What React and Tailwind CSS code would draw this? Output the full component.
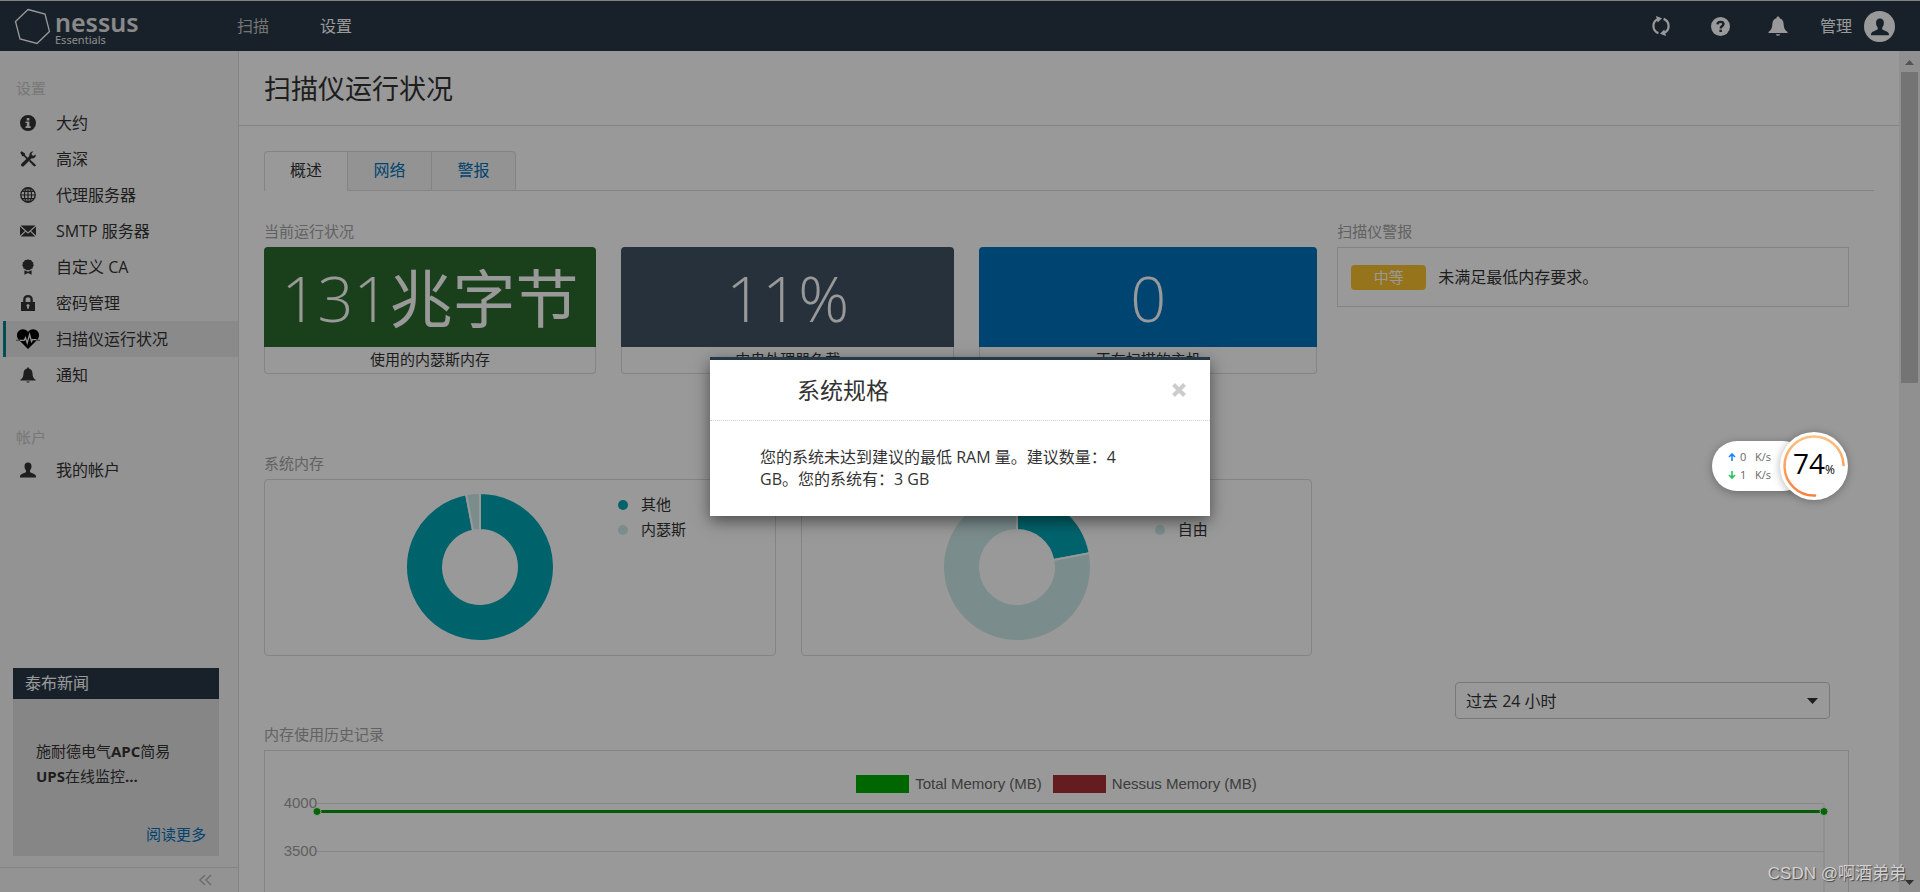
import React from 'react';

const menu = [
  { icon: 'info', label: '大约' },
  { icon: 'tools', label: '高深' },
  { icon: 'globe', label: '代理服务器' },
  { icon: 'mail', label: 'SMTP 服务器' },
  { icon: 'award', label: '自定义 CA' },
  { icon: 'lock', label: '密码管理' },
  { icon: 'heart', label: '扫描仪运行状况', active: true },
  { icon: 'bell', label: '通知' },
];

const BELL = 'M8 0.4c-.7 0-1.2.5-1.2 1.1v.3C4.6 2.3 3.6 4 3.5 6.4 3.4 9.3 2.6 11.300 .4 12.700v.9h15.200v-.9c-2.200-1.400-3-3.400-3.100-6.300-.1-2.400-1.100-4.100-3.300-4.600v-.3C9.200.9 8.700.4 8 .4zM6.300 14.600h3.400c-.2.8-.9 1.200-1.700 1.200s-1.500-.4-1.700-1.200z';
const USER = 'M8 .5c2.300 0 3.500 1.500 3.500 3.700 0 1.700-.6 3.200-1.500 4.200v1.700c.4.8 5.500 1.700 6 4.100v1.300H0v-1.300c.5-2.400 5.600-3.300 6-4.100V8.400C5.100 7.400 4.500 5.900 4.500 4.200 4.500 2 5.700.5 8 .5z';

const Icon = ({ name, className }) => (
  <svg className={className} viewBox="0 0 16 16" fill="currentColor" aria-hidden="true">
    {name === 'info' && (
      <path fillRule="evenodd" d="M8 0a8 8 0 1 1 0 16A8 8 0 0 1 8 0zM6.700 3v2.400h2.700V3H6.700zM5.500 6.500v1.600h1.300v3.200H5.500v1.600h5.200v-1.600H9.400V6.500H5.500z" />
    )}
    {name === 'tools' && (
      <g>
        <path d="M.3 1.600 1.700.3 5 2.500v1.600l3.100 3.100-1.200 1.200-3.100-3.100H2.300L.3 1.600z" />
        <path d="m10.200 8.700 5.200 4.700c.6.6.6 1.100 0 1.700s-1.200.6-1.800 0L8.900 10l1.300-1.300z" />
        <path d="M15.700 3.400c.6 2.300-1.600 4.500-4 3.900L4 15c-.8.8-1.800.8-2.500.1s-.7-1.700.1-2.500l7.800-7.500C8.900 2.600 11 .3 13.400.6l-1.900 2 .4 1.700 1.800.5 2-1.400z" />
      </g>
    )}
    {name === 'globe' && (
      <g fill="none" stroke="currentColor" strokeWidth="1.2">
        <circle cx="8" cy="8" r="7.200" strokeWidth="1.400" />
        <ellipse cx="8" cy="8" rx="3.600" ry="7.200" />
        <path d="M8 1v14M1 8h14M2 4.400h12M2 11.600h12" />
      </g>
    )}
    {name === 'mail' && (
      <g>
        <path d="M.6 2.500h14.800L8 9.200.6 2.500z" />
        <path d="M0 3.500 4.900 8 0 12.600V3.500zM16 3.500 11.100 8 16 12.600V3.500z" />
        <path d="M5.700 8.700 8 10.800l2.300-2.100 4.900 4.800H.8l4.900-4.800z" />
      </g>
    )}
    {name === 'award' && (
      <g>
        <path d="m8 .2 1.400.9 1.700-.1.800 1.500 1.400.9-.1 1.700.6 1.500-1 1.400-.3 1.600-1.600.5-1.200 1.200L8 10.900l-1.700.4-1.200-1.200-1.600-.5-.3-1.600-1-1.400.6-1.500-.1-1.700 1.400-.9.800-1.500 1.700.1L8 .2z" />
        <path d="M4.400 11.200 8 12.700l3.600-1.500v4.600L8 13.900l-3.600 1.900v-4.600z" />
      </g>
    )}
    {name === 'lock' && (
      <path fillRule="evenodd" d="M3.200 7V4.400C3.200 1.600 5.100 0 8 0s4.800 1.600 4.800 4.400V7H15v9H1V7h2.200zm2.400 0h4.800V4.500C10.400 3 9.500 2.200 8 2.200s-2.400.8-2.400 2.300V7zM8 9.200c-1 0-1.600.6-1.600 1.400 0 .5.300.9.700 1.200v1.900h1.800v-1.900c.4-.3.7-.7.7-1.200C9.600 9.800 9 9.200 8 9.200z" />
    )}
    {name === 'bell' && <path d={BELL} />}
    {name === 'user' && <path d={USER} />}
  </svg>
);

const HeartIcon = () => (
  <svg className="h-5 w-6" viewBox="0 0 24 20" aria-hidden="true">
    <path fill="#000" d="M12 20 2.700 10.700C-.2 7.500.7 2.600 4 1c3-1.400 6.300-.5 8 2 1.700-2.500 5-3.400 8-2 3.300 1.600 4.200 6.500 1.300 9.700L12 20z" />
    <path fill="none" stroke="#f0f0f0" strokeWidth="1.300" d="M3.500 11.300h4.700l1.300-2.600 1.700 5.300L13.600 5.500l1.900 7 1-1.800h4.200" />
    <path stroke="#666" strokeWidth="1" d="M0 11.300h4M20 11.300h4" />
  </svg>
);

const MenuItem = ({ item }) => (
  <li>
    <a
      href="#"
      className={
        item.active
          ? 'ml-[3px] flex h-9 items-center border-l-[3px] border-[#00818d] bg-[#e6e6e6] pl-[10px] text-base'
          : 'flex h-9 items-center pl-4 text-base'
      }
    >
      <span className="mr-4 flex w-6 justify-center">
        {item.active ? <HeartIcon /> : <Icon name={item.icon} className="size-4" />}
      </span>
      {item.label}
    </a>
  </li>
);

const Sidebar = () => (
  <aside className="flex w-[239px] shrink-0 flex-col border-r border-[#dcdcdc] bg-[#f5f5f5]">
    <nav className="pt-[25px]">
      <h3 className="mb-[5px] pl-4 text-[15px] leading-6 text-[#c8c8c8]">设置</h3>
      <ul>
        {menu.map((item) => (
          <MenuItem key={item.label} item={item} />
        ))}
      </ul>
      <h3 className="mt-8 mb-[3px] pl-4 text-[15px] leading-6 text-[#c8c8c8]">帐户</h3>
      <ul>
        <MenuItem item={{ icon: 'user', label: '我的帐户' }} />
      </ul>
    </nav>
    <section className="mt-auto mr-[19px] mb-[11px] ml-[13px] bg-[#e0e0e0]">
      <h3 className="bg-[#283846] px-3 text-base leading-[31px] text-white">泰布新闻</h3>
      <p className="px-[23px] pt-10 text-[15px] leading-[25px]">
        施耐德电气<b>APC</b>简易
        <br />
        <b>UPS</b>在线监控<b>...</b>
      </p>
      <p className="px-[13px] pt-[33px] pb-[9px] text-right text-[15px] leading-[25px]">
        <a href="#" className="text-[#0071b9]">阅读更多</a>
      </p>
    </section>
    <button className="flex h-[25px] items-center justify-end border-t border-[#dcdcdc] pr-[26px]" aria-label="collapse">
      <svg className="h-3 w-[14px]" viewBox="0 0 14 12" fill="none" stroke="#b5b5b5" strokeWidth="1.500">
        <path d="M7 1 2 6l5 5M13 1 8 6l5 5" />
      </svg>
    </button>
  </aside>
);

const Header = () => (
  <header className="flex h-[51px] shrink-0 items-center border-t border-[#d6d6d6] bg-[#283846] text-white">
    <a href="#" className="flex w-[237px] items-center pl-[14px]">
      <svg className="size-[37px]" viewBox="0 0 37 37" fill="none" stroke="#fff" strokeWidth="1.300">
        <path d="M14 1.500 31 6l4.500 17.500L23 35.500 6 31 1.500 13.500 14 1.500z" />
      </svg>
      <span className="ml-1 flex flex-col pt-1 font-[Noto_Sans]">
        <span className="text-[25px] leading-6 font-semibold text-[#e6e6e6]">nessus</span>
        <span className="text-[11px] leading-3 text-[#e6e6e6]">Essentials</span>
      </span>
    </a>
    <nav className="flex gap-[51px] text-base">
      <a href="#" className="text-[#c4c4c4]">扫描</a>
      <a href="#">设置</a>
    </nav>
    <div className="ml-auto flex items-center pr-[25px]">
      <button className="mr-10" aria-label="refresh">
        <svg className="size-5" viewBox="0 0 20 20">
          <path fill="none" stroke="#fff" strokeWidth="2.200" d="M12.600 2.900a7.600 7.600 0 0 1 1.200 13.700M7.400 17.100A7.600 7.600 0 0 1 6.200 3.400" />
          <path fill="#fff" d="M5 0l6 2.300-4.300 4.200L5 0zM15 20l-6-2.300 4.300-4.200L15 20z" />
        </svg>
      </button>
      <button className="mr-[38px]" aria-label="help">
        <svg className="size-[19px]" viewBox="0 0 19 19">
          <circle cx="9.500" cy="9.500" r="9.500" fill="#fff" />
          <path fill="none" stroke="#283846" strokeWidth="2.400" d="M6.500 7.400C6.600 5.700 7.700 4.900 9.500 4.900c1.900 0 3 .8 3 2.200 0 2-2.800 1.900-2.800 4.300" />
          <path fill="#283846" d="M8.400 12.700h2.500v2.300H8.400z" />
        </svg>
      </button>
      <button className="mr-8" aria-label="notifications">
        <Icon name="bell" className="size-5" />
      </button>
      <button className="flex items-center gap-3 text-base">
        管理
        <svg className="size-[31px]" viewBox="0 0 31 31">
          <circle cx="15.500" cy="15.500" r="15.500" fill="#fff" />
          <path fill="#283846" transform="translate(7 7) scale(1.120)" d={USER} />
        </svg>
      </button>
    </div>
  </header>
);

const Label = ({ children }) => (
  <h3 className="mb-1 text-[15px] leading-6 text-[#a3a3a3]">{children}</h3>
);

const StatCard = ({ color, value, label }) => (
  <div className="text-center">
    <div className={`flex h-[100px] items-center justify-center rounded-t text-[63px] leading-none font-light text-white ${color}`}>
      {value}
    </div>
    <div className="h-[27px] rounded-b border border-t-0 border-[#dcdcdc] text-[15px] leading-[25px]">{label}</div>
  </div>
);

// point on a circle, angle as a share of the full turn starting at 12 o'clock
const point = (share, r) => {
  const a = share * Math.PI * 2 - Math.PI / 2;
  return `${75 + r * Math.cos(a)} ${75 + r * Math.sin(a)}`;
};

const slice = (from, to) => {
  const large = to - from > 0.5 ? 1 : 0;
  return `M${point(from, 74)}A74 74 0 ${large} 1 ${point(to, 74)}L${point(to, 37)}A37 37 0 ${large} 0 ${point(from, 37)}Z`;
};

const Donut = ({ title, share, names }) => (
  <div>
    <Label>{title}</Label>
    <div className="flex h-[177px] rounded border border-[#dcdcdc] pl-[140px]">
      <svg className="mt-[12px] size-[150px] shrink-0" viewBox="0 0 150 150" stroke="#fff" strokeWidth="2">
        <path fill="#00a5b5" d={slice(0, share)} />
        <path fill="#cdeaec" d={slice(share, 1)} />
      </svg>
      <ul className="mt-[12px] ml-[63px] text-[15px] leading-[25px]">
        <li className="flex items-center gap-[13px]">
          <span className="size-[10px] rounded-full bg-[#00a5b5]" />
          {names[0]}
        </li>
        <li className="flex items-center gap-[13px]">
          <span className="size-[10px] rounded-full bg-[#cdeaec]" />
          {names[1]}
        </li>
      </ul>
    </div>
  </div>
);

const History = () => (
  <div className="h-[400px] border border-[#dcdcdc] px-6 pt-[23px] font-[Liberation_Sans] text-[15px] text-[#666]">
    <div className="flex justify-center gap-[11px] leading-5">
      <span className="flex items-center gap-[6px]">
        <span className="h-[18px] w-[53px] bg-[#00aa00]" />
        Total Memory (MB)
      </span>
      <span className="flex items-center gap-[6px]">
        <span className="h-[18px] w-[53px] bg-[#a93034]" />
        Nessus Memory (MB)
      </span>
    </div>
    <div className="flex">
      <div className="w-7 shrink-0 text-right leading-[18px] text-[#a0a0a0]">
        <div className="-ml-6 h-12">4000</div>
        <div className="-ml-6 h-12">3500</div>
      </div>
      <svg className="h-[300px] grow overflow-visible" stroke="#e2e2e2">
        <line x1="0" y1="9.500" x2="100%" y2="9.500" />
        <line x1="0" y1="57.500" x2="100%" y2="57.500" />
        <line x1="100%" y1="9.500" x2="100%" y2="300" />
        <line x1="0" y1="17.500" x2="100%" y2="17.500" stroke="#0a9a0a" strokeWidth="3" />
        <circle cx="0" cy="17.500" r="4" fill="#00aa00" stroke="#fff" />
        <circle cx="100%" cy="17.500" r="4" fill="#00aa00" stroke="#fff" />
      </svg>
    </div>
  </div>
);

const Scrollbar = () => (
  <div className="flex w-[21px] shrink-0 flex-col items-center justify-between bg-[#f1f1f1]">
    <div className="flex w-full flex-col items-center">
      <svg className="h-[21px] w-[9px]" viewBox="0 0 9 21">
        <path fill="#8b8b8b" d="M4.500 9 9 14H0z" />
      </svg>
      <div className="h-[311px] w-[17px] bg-[#c1c1c1]" />
    </div>
    <svg className="h-[21px] w-[9px]" viewBox="0 0 9 21">
      <path fill="#505050" d="M4.500 14 0 9h9z" />
    </svg>
  </div>
);

const Modal = () => (
  <div role="dialog" aria-label="系统规格" className="absolute top-[40%] left-1/2 w-[500px] -translate-x-1/2 border-t-[3px] border-[#263746] bg-white shadow-[0_5px_15px_rgba(0,0,0,0.5)]">
    <div className="flex h-[61px] items-center justify-between border-b border-dotted border-[#d0d0d0] pr-6 pl-[87px]">
      <h2 className="text-[23px] leading-8">系统规格</h2>
      <button aria-label="close">
        <svg className="size-[14px]" viewBox="0 0 14 14" stroke="#ccc" strokeWidth="4">
          <path d="m1.500 1.500 11 11M12.500 1.500l-11 11" />
        </svg>
      </button>
    </div>
    <p className="pt-[25px] pr-20 pb-[26px] pl-[50px] text-base leading-[22px]">
      您的系统未达到建议的最低 RAM 量。建议数量：4 GB。您的系统有：3 GB
    </p>
  </div>
);

const SpeedBall = () => (
  <div className="absolute top-[432px] right-[72px] flex items-center">
    <div className="-mr-[28px] flex h-[50px] w-24 flex-col justify-center rounded-full bg-white pl-4 text-[11px] leading-[18px] text-[#666] shadow-[0_2px_10px_rgba(0,0,0,0.3)]">
      <span className="flex items-center">
        <svg className="mr-1 size-2" viewBox="0 0 8 8" fill="none" stroke="#1d82f5" strokeWidth="1.600">
          <path d="M4 8V1M1 4l3-3 3 3" />
        </svg>
        <span className="w-[15px]">0</span>K/s
      </span>
      <span className="flex items-center">
        <svg className="mr-1 size-2" viewBox="0 0 8 8" fill="none" stroke="#21c25e" strokeWidth="1.600">
          <path d="M4 0v7M1 4l3 3 3-3" />
        </svg>
        <span className="w-[15px]">1</span>K/s
      </span>
    </div>
    <div className="relative flex size-[68px] items-center justify-center rounded-full bg-white shadow-[0_1px_8px_rgba(0,0,0,0.3)]">
      <svg className="absolute inset-0 size-full" viewBox="0 0 68 68" fill="none">
        <defs>
          <linearGradient id="ring" x1="0" y1="0" x2="0" y2="1">
            <stop offset="0" stopColor="#fdc283" />
            <stop offset="1" stopColor="#f9803a" />
          </linearGradient>
        </defs>
        <path d="M63.500 33A29.500 29.500 0 1 0 35 63.500" stroke="url(#ring)" strokeWidth="2.500" strokeLinecap="round" />
      </svg>
      <span className="flex items-baseline text-[28px] leading-9 text-black">
        74<small className="text-[12px]">%</small>
      </span>
    </div>
  </div>
);

const App = () => (
  <div className="relative flex h-screen flex-col overflow-hidden bg-white font-['Open_Sans','Noto_Sans_CJK_SC',sans-serif] text-[#333]">
    <Header />
    <div className="flex min-h-0 grow">
      <Sidebar />
      <main className="min-w-0 grow overflow-hidden">
        <h1 className="h-[75px] border-b border-[#dcdcdc] pl-[25px] text-[27px] leading-[76px]">扫描仪运行状况</h1>
        <div className="px-[25px] pt-[25px]">
          <div role="tablist" className="flex h-10 border-b border-[#dcdcdc] text-base">
            <button role="tab" className="-mb-px w-[84px] rounded-tl border border-b-0 border-[#dcdcdc] bg-white pb-[3px]">概述</button>
            <button role="tab" className="w-[84px] border-t border-r border-[#dcdcdc] bg-[#f5f5f5] pb-[2px] text-[#0071b9]">网络</button>
            <button role="tab" className="w-[84px] rounded-tr border-t border-r border-[#dcdcdc] bg-[#f5f5f5] pb-[2px] text-[#0071b9]">警报</button>
          </div>
          <div className="pr-[25px]">
            <div className="mt-7 grid grid-cols-3 gap-[25px]">
              <div className="col-span-2 -mr-[5px]">
                <Label>当前运行状况</Label>
                <div className="grid grid-cols-[332fr_333fr_338fr] gap-[25px]">
                  <StatCard
                    color="bg-[#2a6b2c]"
                    label="使用的内瑟斯内存"
                    value={<>131<span className="font-normal">兆字节</span></>}
                  />
                  <StatCard color="bg-[#425363]" label="中央处理器负载" value="11%" />
                  <StatCard color="bg-[#0072bc]" label="正在扫描的主机" value="0" />
                </div>
              </div>
              <div>
                <Label>扫描仪警报</Label>
                <div className="flex h-[60px] items-center gap-3 border border-[#dcdcdc] px-[13px] text-base">
                  <span className="w-[75px] rounded bg-[#fbc12d] text-center text-[15px] leading-[25px] text-white">中等</span>
                  未满足最低内存要求。
                </div>
              </div>
            </div>
            <div className="mt-[77px] grid grid-cols-3 gap-[25px]">
              <Donut title="系统内存" share={0.97} names={['其他', '内瑟斯']} />
              <Donut title="磁盘空间" share={0.22} names={['已用', '自由']} />
            </div>
            <div className="mt-[26px] flex justify-end pr-[19px]">
              <div className="relative w-[375px]">
                <select aria-label="时间范围" className="h-[37px] w-full appearance-none rounded border border-[#c8c8c8] bg-white pl-[10px] text-base">
                  <option>过去 24 小时</option>
                </select>
                <svg className="pointer-events-none absolute top-4 right-3 h-[6px] w-[11px]" viewBox="0 0 11 6">
                  <path fill="#333" d="M0 0h11L5.500 6z" />
                </svg>
              </div>
            </div>
            <div className="mt-[3px]">
              <Label>内存使用历史记录</Label>
              <History />
            </div>
          </div>
        </div>
      </main>
      <Scrollbar />
    </div>
    <div className="absolute inset-0 bg-black/40" />
    <Modal />
    <SpeedBall />
    <span className="absolute right-[14px] bottom-[6px] font-['Liberation_Sans','Noto_Sans_CJK_SC',sans-serif] text-[17px] leading-6 text-[#d2d2d2] [text-shadow:1px_1px_1px_#444]">
      CSDN @啊酒弟弟
    </span>
  </div>
);

export default App;
